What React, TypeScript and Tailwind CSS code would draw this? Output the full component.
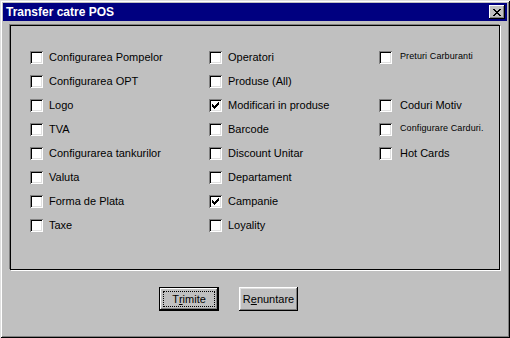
const col1 = [
  { label: 'Configurarea Pompelor', checked: false },
  { label: 'Configurarea OPT', checked: false },
  { label: 'Logo', checked: false },
  { label: 'TVA', checked: false },
  { label: 'Configurarea tankurilor', checked: false },
  { label: 'Valuta', checked: false },
  { label: 'Forma de Plata', checked: false },
  { label: 'Taxe', checked: false },
];

const col2 = [
  { label: 'Operatori', checked: false },
  { label: 'Produse (All)', checked: false },
  { label: 'Modificari in produse', checked: true },
  { label: 'Barcode', checked: false },
  { label: 'Discount Unitar', checked: false },
  { label: 'Departament', checked: false },
  { label: 'Campanie', checked: true },
  { label: 'Loyality', checked: false },
];

// null = empty row
const col3: ({ label: string; checked: boolean; small?: boolean } | null)[] = [
  { label: 'Preturi Carburanti', checked: false, small: true },
  null,
  { label: 'Coduri Motiv', checked: false },
  { label: 'Configurare Carduri.', checked: false, small: true },
  { label: 'Hot Cards', checked: false },
];

// classic 7x7 check glyph, one rect per run of pixels
const checkRuns = [
  [6, 0, 1], [5, 1, 2], [0, 2, 1], [4, 2, 3], [0, 3, 2], [3, 3, 3], [0, 4, 5], [1, 5, 3], [2, 6, 1],
];

function Checkbox({ checked }: { checked: boolean }) {
  return (
    <span className="w-[13px] h-[13px] shrink-0 bg-white flex items-center justify-center shadow-[inset_1px_1px_#808080,inset_-1px_-1px_#ffffff,inset_2px_2px_#000000,inset_-2px_-2px_#dfdfdf]">
      {checked && (
        <svg width="7" height="7" viewBox="0 0 7 7" className="block" shapeRendering="crispEdges">
          {checkRuns.map(([x, y, w]) => (
            <rect key={`${x}-${y}`} x={x} y={y} width={w} height={1} fill="#000" />
          ))}
        </svg>
      )}
    </span>
  );
}

function Row({ label, checked, small, gap = 'gap-[6px]' }: { label: string; checked: boolean; small?: boolean; gap?: string }) {
  return (
    <div className={`h-[24px] flex items-center ${gap}`}>
      <Checkbox checked={checked} />
      <span className={small ? 'text-[9px] tracking-[0.1px]' : 'text-[11px]'}>{label}</span>
    </div>
  );
}

export default function App() {
  return (
    <div
      className="w-[510px] h-[338px] bg-[#c0c0c0] p-[3px] flex flex-col text-black shadow-[inset_1px_1px_#dfdfdf,inset_-1px_-1px_#000000,inset_2px_2px_#ffffff,inset_-2px_-2px_#808080]"
      style={{ fontFamily: '"Liberation Sans", Arial, sans-serif' }}
    >
      <div className="h-[18px] bg-[#000080] flex items-center justify-between pl-[3px] pr-[2px]">
        <span className="text-white font-bold text-[12px] leading-none">Transfer catre POS</span>
        <button className="w-[16px] h-[14px] bg-[#c0c0c0] flex items-center justify-center shadow-[inset_-1px_-1px_#000000,inset_1px_1px_#ffffff,inset_-2px_-2px_#808080]">
          <svg width="8" height="7" viewBox="0 0 8 7" className="block">
            <path d="M0 0h2v1h1v1h2V1h1V0h2v1H7v1H6v1H5v1h1v1h1v1h1v1H6V6H5V5H3v1H2v1H0V6h1V5h1V4h1V3H2V2H1V1H0z" fill="#000" />
          </svg>
        </button>
      </div>

      <div className="mt-[4px] mx-[7px] h-[245px] border border-black shadow-[-1px_-1px_#808080,1px_1px_#ffffff] pt-[19px] pl-[19px] flex">
        <div className="w-[179px] flex flex-col">
          {col1.map((r) => (
            <Row key={r.label} label={r.label} checked={r.checked} />
          ))}
        </div>
        <div className="w-[170px] flex flex-col">
          {col2.map((r) => (
            <Row key={r.label} label={r.label} checked={r.checked} />
          ))}
        </div>
        <div className="flex flex-col">
          {col3.map((r, i) =>
            r ? (
              <Row key={r.label} label={r.label} checked={r.checked} small={r.small} gap="gap-[8px]" />
            ) : (
              <div key={i} className="h-[24px]" />
            )
          )}
        </div>
      </div>

      <div className="mt-[17px] pl-[156px] flex gap-[20px] text-[11px]">
        <button className="w-[60px] h-[24px] border border-black bg-[#c0c0c0] p-0 shadow-[inset_-1px_-1px_#000000,inset_1px_1px_#ffffff,inset_-2px_-2px_#808080]">
          <span className="m-[3px] h-[16px] flex items-center justify-center border border-dotted border-black">
            T<u>r</u>imite
          </span>
        </button>
        <button className="w-[59px] h-[24px] bg-[#c0c0c0] flex items-center justify-center shadow-[inset_-1px_-1px_#000000,inset_1px_1px_#ffffff,inset_-2px_-2px_#808080,inset_2px_2px_#dfdfdf]">
          R<u>e</u>nuntare
        </button>
      </div>
    </div>
  );
}
